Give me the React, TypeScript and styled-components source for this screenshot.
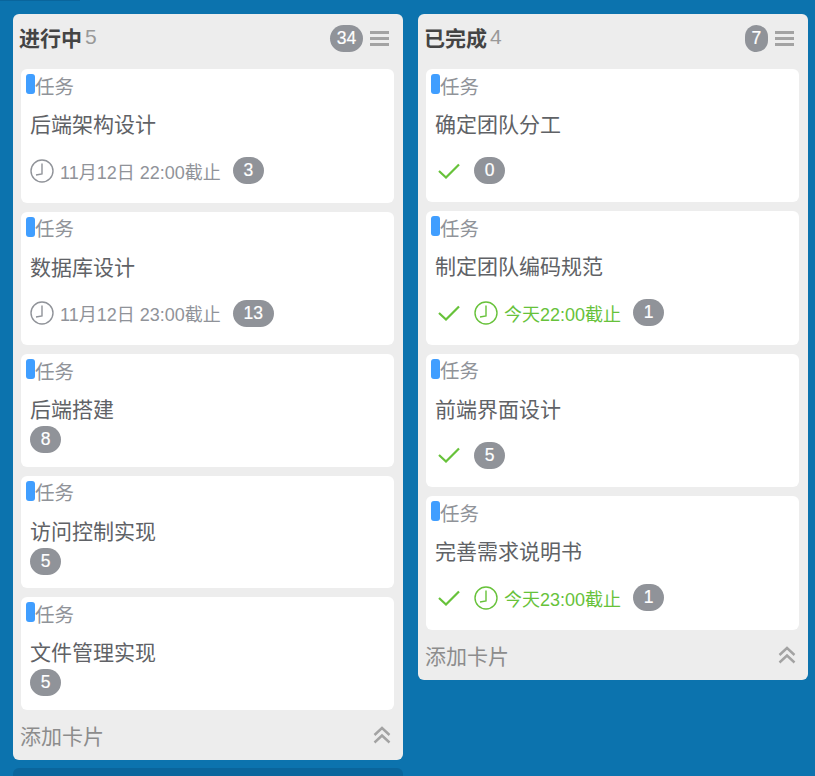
import * as React from 'react';
import styled, { createGlobalStyle } from 'styled-components';

const GlobalStyle = createGlobalStyle`
  html, body {
    margin: 0;
    padding: 0;
    height: 100%;
    overflow: hidden;
    background: #0c73ae;
    font-family: "Liberation Sans", "Noto Sans CJK SC", sans-serif;
  }
`;

const Page = styled.div`
  height: 776px;
  overflow: hidden;
`;

const TopStrip = styled.div`
  width: 80px;
  height: 1px;
  background: #0a659c;
`;

const Board = styled.div`
  display: flex;
  align-items: flex-start;
  gap: 15px;
  padding: 13px 0 0 13px;
`;

const Stack = styled.div`
  display: flex;
  flex-direction: column;
  gap: 8px;
  width: 390px;
`;

const NextColumn = styled.div`
  height: 40px;
  border-radius: 6px;
  background: #0a659c;
`;

const Column = styled.section`
  width: 390px;
  border-radius: 6px;
  background: #ededed;
`;

const ColumnHead = styled.header<{ $height: number }>`
  display: flex;
  align-items: center;
  height: ${(p) => p.$height}px;
  padding: 0 14px 7px 6px;
  box-sizing: border-box;
`;

const ColumnTitle = styled.h2`
  margin: 0 0 2px;
  font-size: 21px;
  font-weight: 700;
  color: #444;
`;

const ColumnCount = styled.span`
  margin: 0 0 2px 3px;
  font-size: 21px;
  color: #999;
`;

const Pill = styled.span<{ $tight?: boolean }>`
  display: inline-flex;
  align-items: center;
  justify-content: center;
  height: 27px;
  padding: 0 ${(p) => (p.$tight ? '6.7px' : '10.7px')};
  border-radius: 14px;
  background: #909399;
  color: #fff;
  font-size: 17.5px;
  -webkit-text-stroke: 0.2px #fff;
`;

const HeadTools = styled.div`
  display: flex;
  align-items: center;
  gap: 7px;
  margin-left: auto;
`;

const CardList = styled.div`
  display: flex;
  flex-direction: column;
  gap: 9px;
  padding: 0 9px 0 8px;
`;

const Card = styled.article`
  padding: 5px 0 13.6px;
  border-radius: 6px;
  background: #fff;
`;

const CardLabel = styled.div`
  display: flex;
  align-items: center;
  height: 22px;
  padding-left: 5px;
  font-size: 19.5px;
  color: #909399;
`;

const Marker = styled.i`
  width: 9px;
  height: 20px;
  margin-top: -2px;
  border-radius: 3px;
  background: #409eff;
`;

const CardTitle = styled.h3`
  margin: 0;
  padding: 14px 9px 0;
  height: 29px;
  line-height: 29px;
  font-size: 21px;
  font-weight: 400;
  color: #606266;
`;

const CardFoot = styled.div<{ $spaced: boolean }>`
  display: flex;
  align-items: center;
  height: 27px;
  padding-left: 9px;
  margin: ${(p) => (p.$spaced ? '18px 0 4.8px' : '2px 0 0')};
`;

const Tick = styled.svg`
  width: 22px;
  height: 16px;
  margin: 0 14px 0 3px;
`;

const Deadline = styled.span<{ $soon: boolean }>`
  display: flex;
  align-items: center;
  gap: 6px;
  margin-right: 12px;
  font-size: 18px;
  color: ${(p) => (p.$soon ? '#67c23a' : '#909399')};
`;

const ColumnFoot = styled.footer`
  display: flex;
  align-items: center;
  justify-content: space-between;
  height: 50.4px;
  padding: 0 12px 0 7px;
  box-sizing: border-box;
  font-size: 21px;
  color: #8c8c8c;
`;

const ClockIcon = () => (
  <svg width="24" height="24" viewBox="0 0 24 24" fill="none" stroke="currentColor" strokeWidth="1.4">
    <circle cx="12" cy="12" r="11" />
    <path d="M12 4.5V15L6 16" />
  </svg>
);

const MenuIcon = () => (
  <svg width="19" height="15" viewBox="0 0 19 15" fill="#a3a3a3">
    <rect width="19" height="3" />
    <rect y="6" width="19" height="3" />
    <rect y="12" width="19" height="3" />
  </svg>
);

const CollapseIcon = () => (
  <svg width="18" height="18" viewBox="0 0 18 18" fill="none" stroke="#a3a3a3" strokeWidth="2.4">
    <path d="M1.5 9L9 2L16.5 9" />
    <path d="M1.5 16.5L9 9.5L16.5 16.5" />
  </svg>
);

interface ITask {
  title: string;
  count: number;
  deadline?: string;
  soon?: boolean;
}

interface IList {
  title: string;
  badge: number;
  headHeight: number;
  done?: boolean;
  tasks: ITask[];
}

const doing: IList = {
  title: '进行中',
  badge: 34,
  headHeight: 55.3,
  tasks: [
    { title: '后端架构设计', count: 3, deadline: '11月12日 22:00截止' },
    { title: '数据库设计', count: 13, deadline: '11月12日 23:00截止' },
    { title: '后端搭建', count: 8 },
    { title: '访问控制实现', count: 5 },
    { title: '文件管理实现', count: 5 },
  ],
};

const finished: IList = {
  title: '已完成',
  badge: 7,
  headHeight: 55,
  done: true,
  tasks: [
    { title: '确定团队分工', count: 0 },
    { title: '制定团队编码规范', count: 1, deadline: '今天22:00截止', soon: true },
    { title: '前端界面设计', count: 5 },
    { title: '完善需求说明书', count: 1, deadline: '今天23:00截止', soon: true },
  ],
};

const TaskCard = ({ task, done }: { task: ITask; done?: boolean }) => (
  <Card>
    <CardLabel>
      <Marker />
      任务
    </CardLabel>
    <CardTitle>{task.title}</CardTitle>
    <CardFoot $spaced={Boolean(done || task.deadline)}>
      {done && (
        <Tick viewBox="0 0 22 16" fill="none" stroke="#67c23a" strokeWidth="2.2">
          <path d="M1 8L8 14.5L21 1.5" />
        </Tick>
      )}
      {task.deadline && (
        <Deadline $soon={Boolean(task.soon)}>
          <ClockIcon />
          {task.deadline}
        </Deadline>
      )}
      <Pill>{task.count}</Pill>
    </CardFoot>
  </Card>
);

const TaskColumn = ({ list }: { list: IList }) => (
  <Column>
    <ColumnHead $height={list.headHeight}>
      <ColumnTitle>{list.title}</ColumnTitle>
      <ColumnCount>{list.tasks.length}</ColumnCount>
      <HeadTools>
        <Pill $tight>{list.badge}</Pill>
        <MenuIcon />
      </HeadTools>
    </ColumnHead>
    <CardList>
      {list.tasks.map((task) => (
        <TaskCard key={task.title} task={task} done={list.done} />
      ))}
    </CardList>
    <ColumnFoot>
      添加卡片
      <CollapseIcon />
    </ColumnFoot>
  </Column>
);

export default function App() {
  return (
    <Page>
      <GlobalStyle />
      <TopStrip />
      <Board>
        <Stack>
          <TaskColumn list={doing} />
          <NextColumn />
        </Stack>
        <TaskColumn list={finished} />
      </Board>
    </Page>
  );
}
